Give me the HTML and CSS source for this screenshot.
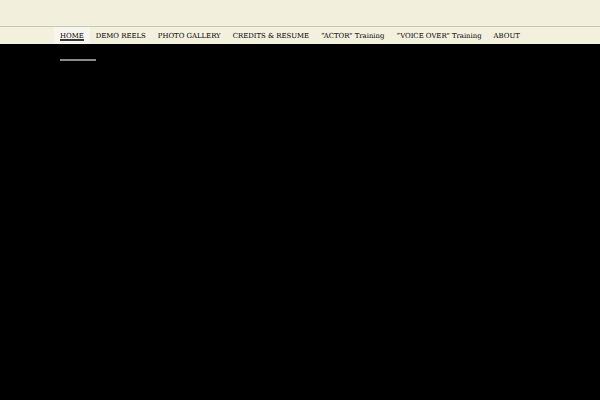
FILE: index.html
```html
<!DOCTYPE html>
<html>
<head>
<meta charset="utf-8">
<link rel="stylesheet" href="styles.css">
</head>
<body>
<div class="top"></div>
<nav class="nav">
  <a class="item active">HOME</a>
  <a class="item">DEMO REELS</a>
  <a class="item">PHOTO GALLERY</a>
  <a class="item">CREDITS &amp; RESUME</a>
  <a class="item">“ACTOR” Training</a>
  <a class="item">“VOICE OVER” Training</a>
  <a class="item">ABOUT</a>
</nav>
<main class="stage">
  <div class="bar"></div>
</main>
</body>
</html>
```
FILE: styles.css
```css
html, body { margin: 0; padding: 0; }
body { background: #000; font-family: "DejaVu Serif", serif; height: 400px; overflow: hidden; }
.top { height: 26px; background: #f2efdc; border-bottom: 1px solid #c9c7b6; }
.nav { height: 17px; background: #f3f0de; display: flex; align-items: stretch; padding-left: 54px; }
.item { font-size: 6.9px; color: #111; padding: 0 6px; display: flex; align-items: center; position: relative; white-space: nowrap; -webkit-text-stroke: 0.06px #111; }
.item.active { background: #f7f6ee; }
.item.active::after { content: ""; position: absolute; left: 6px; right: 6px; bottom: 3px; height: 2px; background: #3a3a3a; }
.stage { padding: 15px 0 0 60px; }
.bar { width: 36px; height: 2px; background: #8a8a8a; }
```
